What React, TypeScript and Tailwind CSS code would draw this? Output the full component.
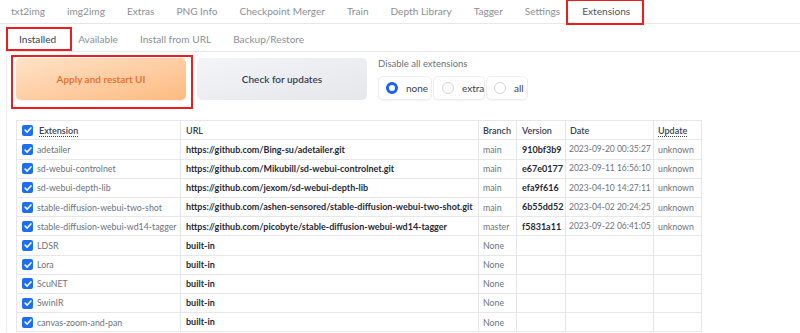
import React from "react";

type Row = {
  name: string;
  url: string;
  branch: string;
  version?: string;
  date?: string;
  update?: string;
};

const rows: Row[] = [
  { name: "adetailer", url: "https://github.com/Bing-su/adetailer.git", branch: "main", version: "910bf3b9", date: "2023-09-20 00:35:27", update: "unknown" },
  { name: "sd-webui-controlnet", url: "https://github.com/Mikubill/sd-webui-controlnet.git", branch: "main", version: "e67e0177", date: "2023-09-11 16:56:10", update: "unknown" },
  { name: "sd-webui-depth-lib", url: "https://github.com/jexom/sd-webui-depth-lib", branch: "main", version: "efa9f616", date: "2023-04-10 14:27:11", update: "unknown" },
  { name: "stable-diffusion-webui-two-shot", url: "https://github.com/ashen-sensored/stable-diffusion-webui-two-shot.git", branch: "main", version: "6b55dd52", date: "2023-04-02 20:24:25", update: "unknown" },
  { name: "stable-diffusion-webui-wd14-tagger", url: "https://github.com/picobyte/stable-diffusion-webui-wd14-tagger", branch: "master", version: "f5831a11", date: "2023-09-22 06:41:05", update: "unknown" },
  { name: "LDSR", url: "built-in", branch: "None" },
  { name: "Lora", url: "built-in", branch: "None" },
  { name: "ScuNET", url: "built-in", branch: "None" },
  { name: "SwinIR", url: "built-in", branch: "None" },
  { name: "canvas-zoom-and-pan", url: "built-in", branch: "None" },
];

const topTabs = ["txt2img", "img2img", "Extras", "PNG Info", "Checkpoint Merger", "Train", "Depth Library", "Tagger", "Settings", "Extensions"];
const subTabs = ["Installed", "Available", "Install from URL", "Backup/Restore"];

function Check() {
  return (
    <span className="inline-flex h-[11px] w-[11px] shrink-0 items-center justify-center rounded-[2px] bg-[#1d6ff2]">
      <svg viewBox="0 0 12 12" className="h-[10px] w-[10px]">
        <path d="M2.6 6.2 L5 8.5 L9.5 3.5" fill="none" stroke="white" strokeWidth="1.9" strokeLinecap="round" strokeLinejoin="round" />
      </svg>
    </span>
  );
}

function Radio({ on }: { on?: boolean }) {
  return on ? (
    <span className="inline-block h-[12px] w-[12px] shrink-0 rounded-full border-[3.5px] border-[#1d5ff2] bg-white" />
  ) : (
    <span className="inline-block h-[12px] w-[12px] shrink-0 rounded-full border border-[#d1d5db] bg-white" />
  );
}

export default function App() {
  return (
    <div className="h-[333px] w-[800px] overflow-hidden bg-white font-['Lato',sans-serif] text-[#374151]">
      {/* top tabs */}
      <div className="flex h-[24px] items-end border-b border-[#e5e7eb]">
        {topTabs.map((t) => (
          <div
            key={t}
            className={
              t === "Extensions"
                ? "relative flex h-[23px] items-center px-[11px] text-[10.1px] text-[#4b5563]"
                : "flex h-[23px] items-center px-[11px] text-[10.1px] text-[#8a8f98]"
            }
          >
            {t}
            {t === "Extensions" && (
              <span className="absolute -top-[1px] -bottom-[2px] -left-[5px] -right-[3px] border-2 border-[#ee1c1c]" />
            )}
          </div>
        ))}
      </div>

      <div className="flex">
        <div className="ml-[6px] w-px self-stretch bg-[#eceef1]" />
        <div className="flex-1">
          {/* sub tabs */}
          <div className="flex h-[28px] items-end border-b border-[#e5e7eb] pl-[1px]">
            {subTabs.map((t) => (
              <div
                key={t}
                className={
                  t === "Installed"
                    ? "relative flex h-[23px] items-center px-[11px] text-[10.1px] text-[#374151]"
                    : "flex h-[23px] items-center px-[11px] text-[10.1px] text-[#8a8f98]"
                }
              >
                {t}
                {t === "Installed" && (
                  <span className="absolute -left-[2px] -top-[1px] bottom-0 -right-[5px] border-2 border-[#ee1c1c]" />
                )}
              </div>
            ))}
          </div>

          {/* buttons */}
          <div className="flex items-start pt-[6px]">
            <div className="relative ml-[9px]">
              <button className="h-[42px] w-[170px] rounded-[5px] bg-gradient-to-br from-[#fee2c7] to-[#fdba80] text-[10px] font-semibold text-[#ea6a1f] shadow-[0_1px_1px_rgba(0,0,0,0.05)]">
                Apply and restart UI
              </button>
              <span className="absolute -left-[5px] -top-[3px] -right-[7px] -bottom-[9px] border-2 border-[#ee1c1c]" />
            </div>
            <button className="ml-[11px] h-[42px] w-[170px] rounded-[5px] bg-gradient-to-br from-[#f3f4f6] to-[#e5e7eb] text-[10px] font-semibold text-[#374151]">
              Check for updates
            </button>
            <div className="ml-[11px] -mt-[1px]">
              <div className="text-[9.5px] text-[#6b7280]">Disable all extensions</div>
              <div className="mt-[5px] flex gap-[1px]">
                <label className="flex h-[24px] w-[54px] items-center gap-[8px] rounded-[5px] border border-[#eceef1] bg-white pl-[7px] text-[10px] text-[#374151] shadow-[0_1px_1px_rgba(0,0,0,0.04)]">
                  <Radio on />
                  none
                </label>
                <label className="flex h-[24px] w-[52px] items-center gap-[8px] rounded-[5px] border border-[#eceef1] bg-white pl-[8px] text-[10px] text-[#374151] shadow-[0_1px_1px_rgba(0,0,0,0.04)]">
                  <Radio />
                  extra
                </label>
                <label className="flex h-[24px] w-[42px] items-center gap-[8px] rounded-[5px] border border-[#eceef1] bg-white pl-[7px] text-[10px] text-[#374151] shadow-[0_1px_1px_rgba(0,0,0,0.04)]">
                  <Radio />
                  all
                </label>
              </div>
            </div>
          </div>

          {/* table */}
          <table className="ml-[9px] mt-[20px] w-[685px] table-fixed border-collapse text-[8.8px]">
            <colgroup>
              <col className="w-[164px]" />
              <col className="w-[298px]" />
              <col className="w-[38px]" />
              <col className="w-[49px]" />
              <col className="w-[88px]" />
              <col className="w-[48px]" />
            </colgroup>
            <thead>
              <tr className="h-[19.2px] text-[9px] text-[#374151]">
                <th className="border border-[#e5e7eb] px-[5px] text-left font-semibold">
                  <div className="flex items-center gap-[6px]">
                    <Check />
                    <span className="underline decoration-dotted underline-offset-2">Extension</span>
                  </div>
                </th>
                <th className="border border-[#e5e7eb] px-[5px] text-left font-semibold">URL</th>
                <th className="border border-[#e5e7eb] px-[4px] text-left font-semibold">Branch</th>
                <th className="border border-[#e5e7eb] px-[5px] text-left font-semibold">Version</th>
                <th className="border border-[#e5e7eb] px-[4px] text-left font-semibold">Date</th>
                <th className="border border-[#e5e7eb] px-[4px] text-left font-semibold">
                  <span className="underline decoration-dotted underline-offset-2">Update</span>
                </th>
              </tr>
            </thead>
            <tbody>
              {rows.map((r) => (
                <tr key={r.name} className="h-[19.2px]">
                  <td className="border border-[#e5e7eb] px-[5px] text-[#6b7280]">
                    <div className="flex items-center gap-[4px] whitespace-nowrap">
                      <Check />
                      {r.name}
                    </div>
                  </td>
                  <td className="whitespace-nowrap border border-[#e5e7eb] px-[5px] text-[9px] font-bold text-[#1f2937]">{r.url}</td>
                  <td className="border border-[#e5e7eb] px-[4px] text-[#6b7280]">{r.branch}</td>
                  <td className="whitespace-nowrap border border-[#e5e7eb] px-[5px] text-[9px] font-bold text-[#1f2937]">{r.version}</td>
                  <td className="whitespace-nowrap border border-[#e5e7eb] pl-[3px] pr-0 text-[8.5px] text-[#6b7280]">{r.date}</td>
                  <td className="border border-[#e5e7eb] px-[4px] text-[#6b7280]">{r.update}</td>
                </tr>
              ))}
            </tbody>
          </table>
        </div>
      </div>
    </div>
  );
}
